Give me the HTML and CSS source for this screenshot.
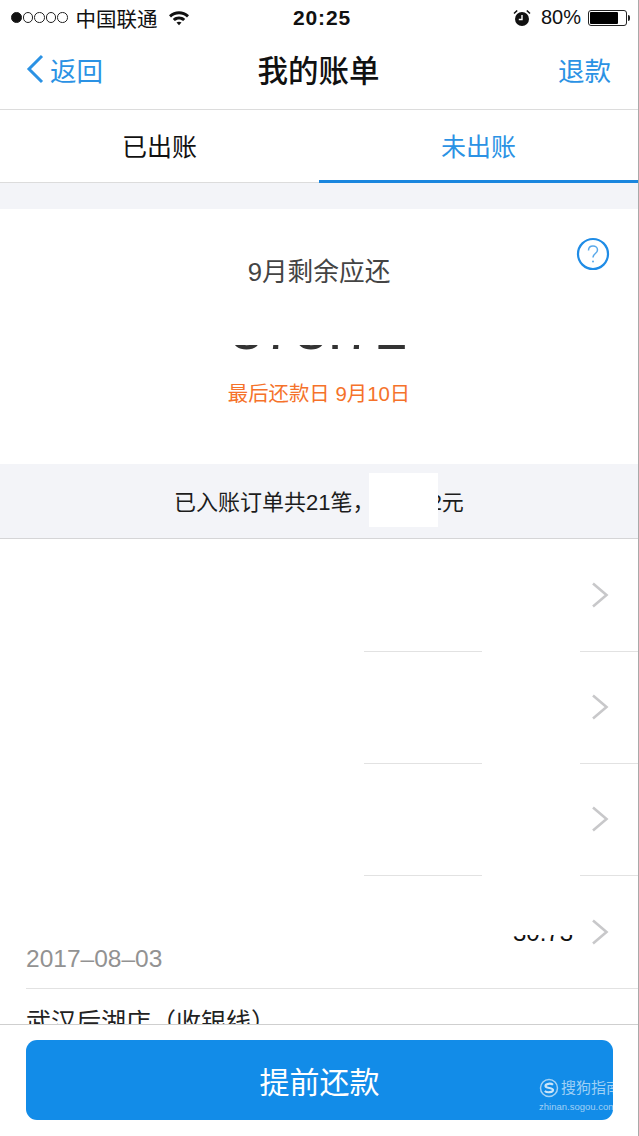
FILE: index.html
```html
<!doctype html>
<html>
<head>
	<meta http-equiv="Content-Type" content="text/html; charset=utf-8" />
	<title>我的账单</title>
	<link rel="stylesheet" href="styles.css">
</head>
<body>
<div class="page">
	<div class="status">
		<div class="status-side">
			<span class="dot on"></span><span class="dot"></span><span class="dot"></span><span class="dot"></span><span class="dot"></span>
			<span class="carrier">中国联通</span>
			<svg class="wifi" width="22" height="17" viewBox="0 0 22 17">
				<path d="M1 6.2C6.6 1 15.4 1 21 6.2L19 8.4C14.400 4.300 7.600 4.300 3 8.400Z" fill="#111"/>
				<path d="M4.800 10C8.400 6.800 13.600 6.800 17.200 10L15.200 12.100C12.700 10 9.300 10 6.800 12.100Z" fill="#111"/>
				<path d="M8.500 13.600C10 12.500 12 12.500 13.500 13.600L11 16.300Z" fill="#111"/>
			</svg>
		</div>
		<div class="clock">20:25</div>
		<div class="status-side right">
			<svg class="alarm" width="18" height="18" viewBox="0 0 18 18">
				<circle cx="9" cy="10" r="7" fill="#111"/>
				<path d="M1 4.500L4.200 1.500M17 4.500L13.800 1.500" stroke="#111" stroke-width="1.600" fill="none"/>
				<path d="M9 6V10.500H5.800" stroke="#fff" stroke-width="1.400" fill="none"/>
			</svg>
			<span class="percent">80%</span>
			<div class="battery"><div class="battery-level"></div></div>
			<div class="battery-tip"></div>
		</div>
	</div>

	<div class="nav">
		<div class="nav-back">
			<svg width="18" height="30" viewBox="0 0 18 30">
				<path d="M16 2L3 15L16 28" stroke="#2b92e4" stroke-width="3" fill="none"/>
			</svg>
			<span>返回</span>
		</div>
		<div class="nav-title">我的账单</div>
		<div class="nav-link">退款</div>
	</div>

	<div class="tabs">
		<div class="tab">已出账</div>
		<div class="tab current">未出账</div>
	</div>

	<div class="gap"></div>

	<div class="summary">
		<svg class="help" width="34" height="34" viewBox="0 0 34 34">
			<circle cx="17" cy="17" r="15" stroke="#1f8ce6" stroke-width="2.200" fill="none"/>
			<path d="M12.500 13.500C12.500 10.500 14.500 9 17 9C19.500 9 21.500 10.600 21.500 13C21.500 16.500 17 16.500 17 20.500" stroke="#5aa9ea" stroke-width="1.500" fill="none"/>
			<circle cx="17" cy="24.500" r="1" fill="#5aa9ea"/>
		</svg>
		<div class="summary-title">9月剩余应还</div>
		<div class="summary-amount">373.72</div>
		<div class="summary-due">最后还款日 9月10日</div>
		<div class="patch patch-amount"></div>
	</div>

	<div class="count">
		<span>已入账订单共21笔，373.72元</span>
		<div class="patch patch-count"></div>
	</div>

	<div class="list">
		<div class="row"><span class="arrow"><svg width="18" height="26" viewBox="0 0 18 26"><path d="M2 1.500L15.500 13L2 24.500" stroke="#c8c8ca" stroke-width="2.600" fill="none"/></svg></span></div>
		<div class="row"><span class="arrow"><svg width="18" height="26" viewBox="0 0 18 26"><path d="M2 1.500L15.500 13L2 24.500" stroke="#c8c8ca" stroke-width="2.600" fill="none"/></svg></span></div>
		<div class="row"><span class="arrow"><svg width="18" height="26" viewBox="0 0 18 26"><path d="M2 1.500L15.500 13L2 24.500" stroke="#c8c8ca" stroke-width="2.600" fill="none"/></svg></span></div>
		<div class="row row-date">
			<span class="date">2017–08–03</span>
			<span class="price">30.73</span>
			<span class="arrow"><svg width="18" height="26" viewBox="0 0 18 26"><path d="M2 1.500L15.500 13L2 24.500" stroke="#c8c8ca" stroke-width="2.600" fill="none"/></svg></span>
		</div>
		<div class="row row-shop">武汉后湖店（收银线）</div>
		<div class="patch patch-left"></div>
		<div class="patch patch-mid"></div>
		<div class="patch patch-price"></div>
	</div>

	<div class="footer">
		<div class="btn">
			提前还款
			<div class="mark">
				<div class="mark-top">
					<svg width="20" height="20" viewBox="0 0 20 20">
						<circle cx="10" cy="10" r="8.500" stroke="#a5d2f5" stroke-width="1.500" fill="none"/>
						<path d="M14 6.800C12 5 6.500 5.500 6.500 8C6.500 10.800 14 9.200 14 12C14 14.500 8 15 5.800 13" stroke="#cbe5f9" stroke-width="2.200" fill="none"/>
					</svg>
					<span>搜狗指南</span>
				</div>
				<div class="mark-url">zhinan.sogou.com</div>
			</div>
		</div>
	</div>
</div>
</body>
</html>
```

FILE: styles.css
```css
*{box-sizing:border-box;}
body{margin:0;padding:0;background:#fff;}
.page{width:639px;height:1136px;border-right:1px solid #a9a9a9;background:#fff;overflow:hidden;display:flex;flex-direction:column;
	font-family:"Liberation Sans","Noto Sans CJK SC",sans-serif;color:#111;}

.status{height:35px;flex:none;display:flex;align-items:center;justify-content:space-between;padding:0 8px 0 11px;}
.status-side{display:flex;align-items:center;width:220px;}
.status-side.right{justify-content:flex-end;}
.dot{width:10.500px;height:10.500px;border-radius:50%;border:1px solid #222;margin-right:1px;flex:none;}
.dot.on{background:#111;}
.carrier{font-size:20.500px;margin-left:7px;}
.wifi{margin-left:10px;}
.clock{font-size:21px;font-weight:bold;letter-spacing:.9px;margin-left:3px;}
.alarm{margin-right:10px;}
.percent{font-size:20px;margin-right:7px;}
.battery{width:39px;height:16px;border:1px solid #222;border-radius:3px;padding:1px;}
.battery-level{width:80%;height:100%;background:#000;border-radius:1px;}
.battery-tip{width:2px;height:6px;margin-left:1px;background:#222;border-radius:0 2px 2px 0;}

.nav{height:75px;flex:none;display:flex;align-items:center;justify-content:space-between;padding:0 27px 6px 26px;border-bottom:1px solid #dcdcdc;}
.nav-back{display:flex;align-items:center;gap:6px;color:#2b92e4;font-size:26.500px;width:110px;}
.nav-title{font-size:30.500px;font-weight:500;}
.nav-link{color:#2b92e4;font-size:26.500px;width:110px;text-align:right;}

.tabs{height:73px;flex:none;display:flex;}
.tab{flex:1;display:flex;align-items:center;justify-content:center;padding-bottom:3px;font-size:25px;border-bottom:1px solid #dcdcdc;}
.tab.current{color:#2b92e4;padding-bottom:1px;border-bottom:3px solid #1a86de;}

.gap{height:26px;flex:none;background:#f3f4f8;}

.summary{height:255px;flex:none;position:relative;display:flex;flex-direction:column;align-items:center;padding-top:46px;}
.help{position:absolute;top:28px;right:28px;}
.summary-title{font-size:25.700px;line-height:34px;color:#444;}
.summary-amount{font-size:58px;line-height:60px;margin-top:10px;color:#333;}
.summary-due{font-size:20.400px;line-height:28px;margin-top:21px;color:#f5722a;}
.patch{position:absolute;background:#fff;}
.patch-amount{left:180px;top:84px;width:280px;height:52px;}

.count{height:75px;flex:none;position:relative;background:#f3f4f8;border-bottom:1px solid #d5d5d7;display:flex;align-items:center;justify-content:center;padding-bottom:3px;font-size:22px;color:#1c1c1c;}
.patch-count{left:369px;top:9px;width:69px;height:54px;}

.list{flex:1;position:relative;overflow:hidden;padding:1px 0 0 26px;}
.row{height:112px;border-bottom:1px solid #e2e2e2;display:flex;align-items:center;justify-content:flex-end;padding-right:29px;position:relative;}
.arrow{display:flex;width:18px;margin-top:-1px;}
.row-date{height:113px;}
.date{position:absolute;left:0;bottom:15px;font-size:24.500px;line-height:28px;color:#929292;}
.price{font-size:24px;line-height:28px;margin:2px 18px 0 0;color:#111;}
.row-shop{height:40px;border:0;justify-content:flex-start;align-items:flex-start;padding-top:19px;font-size:25px;line-height:28px;color:#222;}
.patch-left{left:0;top:0;width:364px;height:345px;}
.patch-mid{left:482px;top:0;width:98px;height:345px;}
.patch-price{left:500px;top:345px;width:80px;height:51px;}

.footer{height:112px;flex:none;border-top:1px solid #cfcfcf;padding:15px 25px 0 26px;background:#fff;}
.btn{height:80px;background:#128ce8;border-radius:11px;color:#fff;font-size:30px;display:flex;align-items:center;justify-content:center;position:relative;overflow:hidden;}
.mark{position:absolute;left:513px;top:38px;width:90px;color:rgba(255,255,255,.6);white-space:nowrap;}
.mark-top{display:flex;align-items:center;gap:2px;font-size:15px;line-height:20px;}
.mark-url{font-size:9.500px;line-height:14px;margin-top:2px;}
```
